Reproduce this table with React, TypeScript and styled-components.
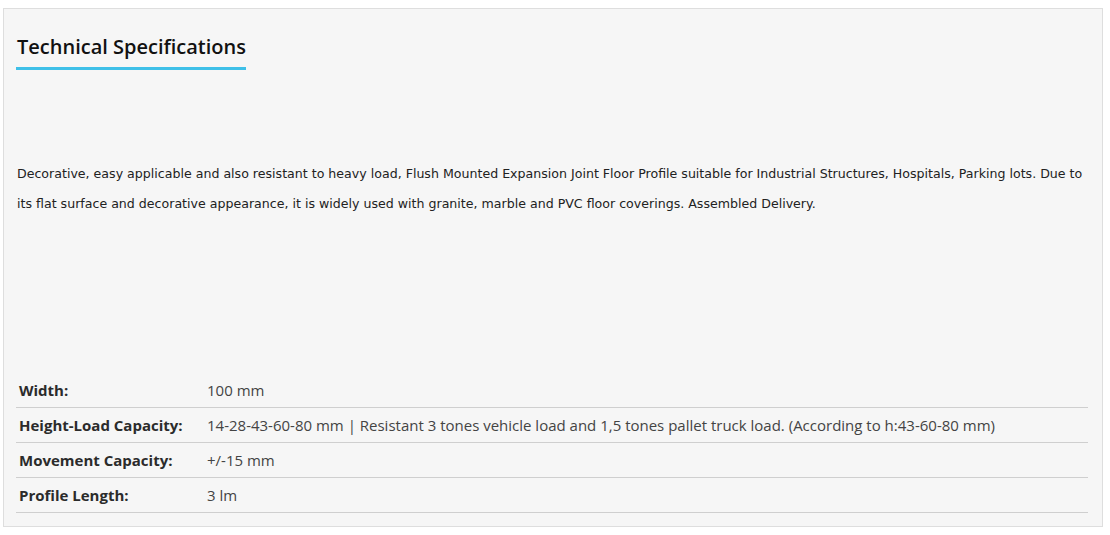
import React from "react";
import styled, { createGlobalStyle } from "styled-components";

const Global = createGlobalStyle`
  html, body { margin: 0; padding: 0; background: #ffffff; }
  body { font-family: "Open Sans", sans-serif; }
`;

const Page = styled.div`
  padding: 8px 8px 8px 3px;
`;

const Panel = styled.section`
  width: 1100px;
  height: 519px;
  box-sizing: border-box;
  border: 1px solid #dedede;
  background: #f6f6f6;
  padding: 24px 13px 0 12px;
  display: flex;
  flex-direction: column;
`;

const Title = styled.h3`
  align-self: flex-start;
  margin: 0;
  font-family: "Open Sans", sans-serif;
  font-weight: 600;
  font-size: 20px;
  line-height: 28px;
  color: #111;
  padding: 0 0 6px 1px;
  border-bottom: 3px solid #3fc0e8;
`;

const Description = styled.p`
  margin: 89px 0 0 1px;
  font-family: "DejaVu Sans", Verdana, sans-serif;
  font-size: 12.6px;
  line-height: 30px;
  color: #222;
`;

const Specs = styled.table`
  margin-top: auto;
  margin-bottom: 13px;
  width: 1072px;
  border-collapse: collapse;
  font-family: "Open Sans", sans-serif;
  font-size: 15px;
  color: #333;
`;

const Row = styled.tr`
  border-bottom: 1px solid #cfcfcf;
`;

const Label = styled.th`
  width: 188px;
  text-align: left;
  font-weight: 700;
  padding: 0 0 0 3px;
  height: 34px;
  color: #2b2b2b;
`;

const Value = styled.td`
  padding: 0;
  color: #444;
`;

const rows: [string, string][] = [
  ["Width:", "100 mm"],
  [
    "Height-Load Capacity:",
    "14-28-43-60-80 mm | Resistant 3 tones vehicle load and 1,5 tones pallet truck load. (According to h:43-60-80 mm)",
  ],
  ["Movement Capacity:", "+/-15 mm"],
  ["Profile Length:", "3 lm"],
];

export default function App() {
  return (
    <>
      <Global />
      <Page>
        <Panel>
          <Title>Technical Specifications</Title>
          <Description>
            Decorative, easy applicable and also resistant to heavy load, Flush Mounted Expansion Joint Floor
            Profile suitable for Industrial Structures, Hospitals, Parking lots. Due to its flat surface and
            decorative appearance, it is widely used with granite, marble and PVC floor coverings. Assembled
            Delivery.
          </Description>
          <Specs>
            <tbody>
              {rows.map(([k, v]) => (
                <Row key={k}>
                  <Label>{k}</Label>
                  <Value>{v}</Value>
                </Row>
              ))}
            </tbody>
          </Specs>
        </Panel>
      </Page>
    </>
  );
}
